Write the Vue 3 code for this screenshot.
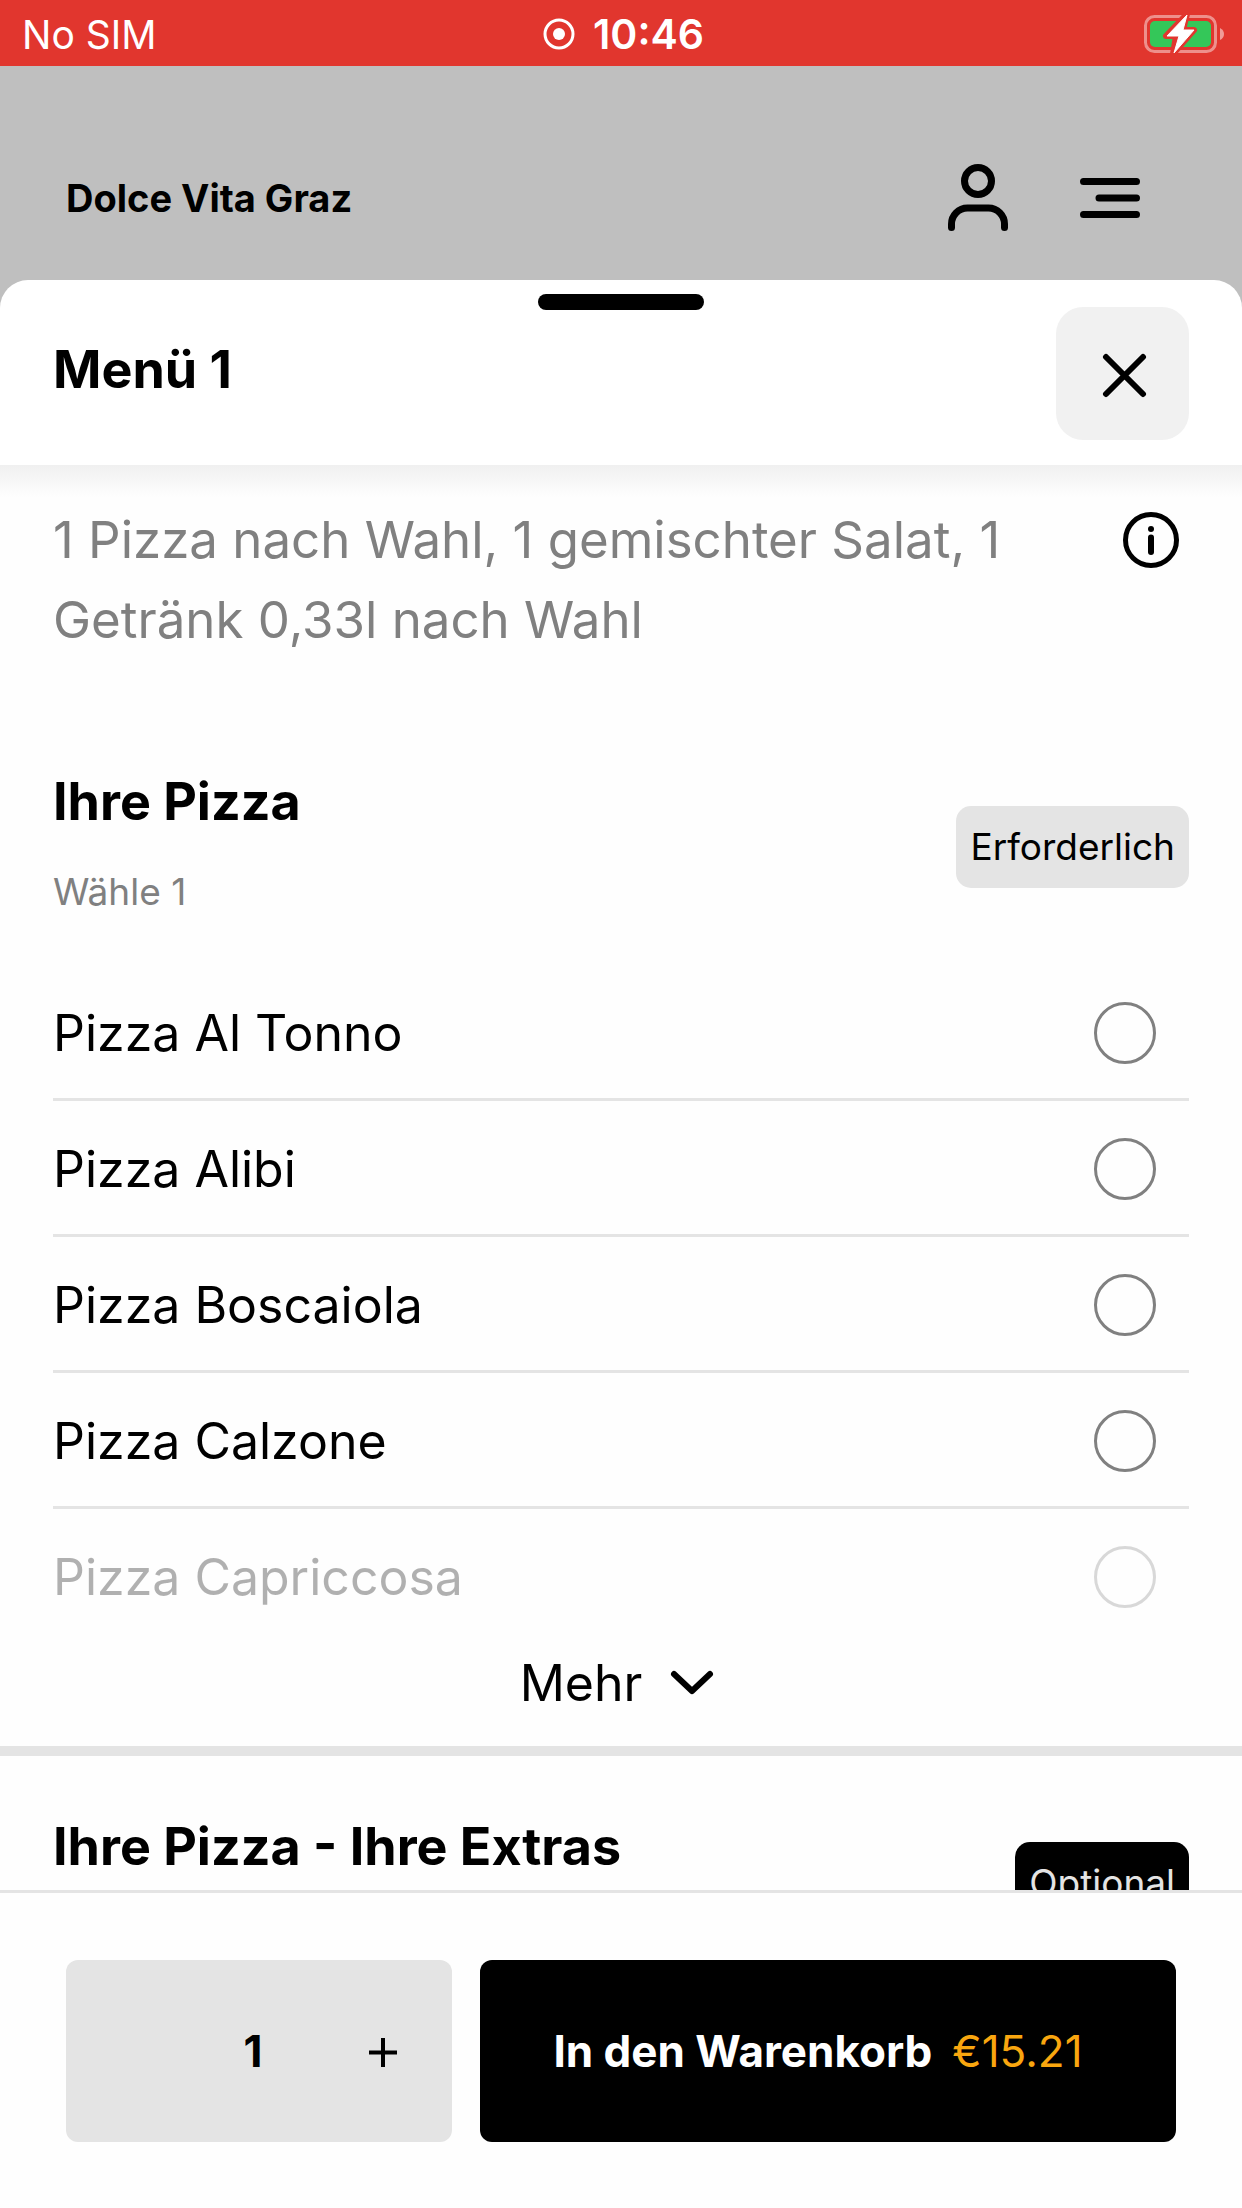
<script setup>
import { ref } from 'vue'

const pizzas = ['Pizza Al Tonno', 'Pizza Alibi', 'Pizza Boscaiola', 'Pizza Calzone', 'Pizza Capriccosa']
const selected = ref('')
const quantity = ref(1)
</script>

<template>
  <div class="screen">
    <div class="status">
      <span class="carrier">No SIM</span>
      <span class="clock">
        <svg class="record" viewBox="0 0 32 32" aria-hidden="true">
          <circle cx="16" cy="16" r="14" fill="none" stroke="#fff" stroke-width="3" />
          <circle cx="16" cy="16" r="6" fill="#fff" />
        </svg>
        10:46
      </span>
      <svg class="battery" viewBox="0 0 82 40" aria-hidden="true">
        <rect x="2.500" y="2.500" width="70" height="35" rx="9" fill="none" stroke="#fff" stroke-opacity=".45" stroke-width="3" />
        <rect x="7" y="7" width="61" height="26" rx="5" fill="#34c759" />
        <path d="M77 14q4 2 4 6t-4 6z" fill="#fff" fill-opacity=".5" />
        <path d="M44 0 23 22h10l-3 18 21-24H40z" fill="#fff" stroke="#e1362e" stroke-width="6" stroke-linejoin="round" />
        <path d="M44 1 24 22h12l-5 17 20-23H40z" fill="#fff" stroke="#fff" stroke-width="1" stroke-linejoin="round" />
      </svg>
    </div>

    <header class="appbar">
      <span class="brand">Dolce Vita Graz</span>
      <button class="icon-button" type="button" aria-label="Konto">
        <svg viewBox="0 0 60 68" fill="none" stroke="#000" stroke-width="7" stroke-linecap="round" aria-hidden="true">
          <circle cx="30" cy="17" r="13.500" />
          <path d="M3.500 63.500V60a16 16 0 0 1 16-16h21a16 16 0 0 1 16 16v3.500" />
        </svg>
      </button>
      <button class="icon-button" type="button" aria-label="Navigation">
        <svg viewBox="0 0 60 68" fill="none" stroke="#000" stroke-width="7" stroke-linecap="round" aria-hidden="true">
          <path d="M3.500 17.500h53M19 34h37.500M3.500 50.500h53" />
        </svg>
      </button>
    </header>

    <main class="sheet">
      <div class="sheet-head">
        <span class="handle"></span>
        <h1>Menü 1</h1>
        <button class="close" type="button" aria-label="Schließen">
          <svg viewBox="0 0 48 48" fill="none" stroke="#000" stroke-width="6" stroke-linecap="round" aria-hidden="true">
            <path d="M7 7l37 37M44 7L7 44" />
          </svg>
        </button>
      </div>

      <div class="content">
        <div class="intro">
          <p>1 Pizza nach Wahl, 1 gemischter Salat, 1 Getränk 0,33l nach Wahl</p>
          <button class="info" type="button" aria-label="Informationen">
            <svg viewBox="0 0 58 58" aria-hidden="true">
              <circle cx="29" cy="29" r="25.500" fill="none" stroke="#000" stroke-width="5" />
              <circle cx="29" cy="18" r="3" />
              <path d="M29 26.500v14.500" stroke="#000" stroke-width="6" stroke-linecap="round" />
            </svg>
          </button>
        </div>

        <section class="group">
          <div class="group-head">
            <div class="group-text">
              <h2>Ihre Pizza</h2>
              <p>Wähle 1</p>
            </div>
            <span class="badge">Erforderlich</span>
          </div>
          <ul>
            <li v-for="pizza in pizzas" :key="pizza">
              <label>
                <span>{{ pizza }}</span>
                <input v-model="selected" type="radio" name="pizza" :value="pizza" />
              </label>
            </li>
          </ul>
          <button class="more" type="button">
            Mehr
            <svg viewBox="0 0 52 30" fill="none" stroke="#000" stroke-width="6" stroke-linecap="round" stroke-linejoin="round" aria-hidden="true">
              <path d="M8 6l18 17L44 6" />
            </svg>
          </button>
        </section>

        <section class="group extras">
          <div class="group-head">
            <h2>Ihre Pizza - Ihre Extras</h2>
            <span class="badge dark">Optional</span>
          </div>
        </section>
      </div>
    </main>

    <footer>
      <div class="stepper">
        <output>{{ quantity }}</output>
        <button type="button" aria-label="Mehr hinzufügen" @click="quantity++">
          <svg viewBox="0 0 30 34" aria-hidden="true">
            <path d="M15 4v29M1 18.500h28" stroke="#000" stroke-width="4" />
          </svg>
        </button>
      </div>
      <button class="cart" type="button">
        <strong>In den Warenkorb</strong>
        <span>€15.21</span>
      </button>
    </footer>
  </div>
</template>

<style>
body {
  margin: 0;
}
</style>

<style scoped>
.screen {
  display: flex;
  flex-direction: column;
  height: 100vh;
  background: #bfbfbf;
  color: #000;
  font-family: Inter, "Liberation Sans", sans-serif;
  font-size: 50px;
}

h1,
h2,
p,
ul {
  margin: 0;
  padding: 0;
}

button {
  margin: 0;
  padding: 0;
  border: 0;
  background: none;
  color: inherit;
  font: inherit;
  cursor: pointer;
}

svg {
  display: block;
}

.status {
  display: grid;
  grid-template-columns: 1fr auto 1fr;
  align-items: center;
  height: 64px;
  padding: 2px 17px 0 22px;
  background: #e1362e;
  color: #fff;
  font-size: 39px;
}

.clock {
  display: flex;
  align-items: center;
  gap: 18px;
  font-size: 41px;
  font-weight: 600;
}

.record {
  width: 32px;
  height: 32px;
}

.battery {
  justify-self: end;
  width: 82px;
  height: 40px;
}

.appbar {
  display: flex;
  flex: none;
  align-items: center;
  gap: 72px;
  height: 164px;
  padding: 50px 102px 0 66px;
}

.brand {
  flex: 1;
  font-size: 38px;
  font-weight: 700;
}

.icon-button svg {
  width: 60px;
  height: 68px;
}

.sheet {
  display: flex;
  flex: 1;
  flex-direction: column;
  min-height: 0;
  border-radius: 28px 28px 0 0;
  background: #fff;
}

.sheet-head {
  position: relative;
  display: flex;
  flex: none;
  align-items: center;
  justify-content: space-between;
  padding: 27px 53px 25px;
}

.handle {
  position: absolute;
  top: 14px;
  left: 50%;
  width: 166px;
  height: 16px;
  border-radius: 8px;
  background: #000;
  transform: translateX(-50%);
}

h1,
h2 {
  font-size: 52px;
  font-weight: 700;
  line-height: 60px;
}

h1 {
  padding-bottom: 8px;
}

.close {
  display: grid;
  place-items: center;
  width: 133px;
  height: 133px;
  border-radius: 27px;
  background: #f1f1f1;
}

.close svg {
  width: 48px;
  height: 48px;
}

.content {
  flex: 1;
  min-height: 0;
  padding-top: 35px;
  overflow: hidden;
  background: linear-gradient(#f0f0f0, #fefefe 32px);
}

.intro {
  display: flex;
  align-items: flex-start;
  justify-content: space-between;
  padding: 0 62px 0 53px;
}

.intro p {
  width: 980px;
  color: #808080;
  font-size: 51px;
  line-height: 80px;
}

.info {
  margin-top: 11px;
}

.info svg {
  width: 58px;
  height: 58px;
}

.group {
  padding: 112px 53px 0;
}

.group-head {
  display: flex;
  align-items: center;
  justify-content: space-between;
}

.group-text {
  display: grid;
  gap: 34px;
  padding-bottom: 4px;
}

.group-text p {
  color: #808080;
  font-size: 37px;
  line-height: 52px;
}

.badge {
  padding: 0 14px;
  border-radius: 15px;
  background: #e4e4e4;
  font-size: 37px;
  line-height: 82px;
}

.badge.dark {
  background: #000;
  color: #e4e4e4;
}

ul {
  margin-top: 43px;
  list-style: none;
}

label {
  display: flex;
  align-items: center;
  justify-content: space-between;
  height: 131px;
  padding: 2px 33px 0 0;
  border-bottom: 3px solid #e4e4e4;
}

li:last-child label {
  border-bottom: 0;
  opacity: 0.3;
}

input {
  width: 62px;
  height: 62px;
  margin: 0;
  border: 3px solid #808080;
  border-radius: 50%;
  appearance: none;
}

input:checked {
  border-width: 18px;
  border-color: #000;
}

.more {
  display: flex;
  align-items: center;
  gap: 24px;
  height: 82px;
  margin: 0 auto 22px;
  padding-right: 4px;
}

.more svg {
  width: 52px;
  height: 30px;
}

.extras {
  padding-top: 61px;
  border-top: 10px solid #e4e4e4;
}

.extras .group-head {
  align-items: flex-start;
}

.extras .badge {
  margin-top: 25px;
}

footer {
  display: flex;
  flex: none;
  gap: 28px;
  padding: 67px 66px 66px;
  border-top: 3px solid #e4e4e4;
  background: #fefefe;
  font-size: 44px;
}

.stepper {
  display: grid;
  grid-template-columns: 1fr 130px 130px;
  flex: none;
  width: 382px;
  padding-right: 4px;
  border-radius: 12px;
  background: #e4e4e4;
}

output {
  grid-column: 2;
  align-self: center;
  font-weight: 700;
  text-align: center;
}

.stepper button {
  display: grid;
  place-items: center;
}

.stepper svg {
  width: 30px;
  height: 34px;
}

.cart {
  display: flex;
  flex: 1;
  align-items: center;
  justify-content: center;
  gap: 20px;
  height: 182px;
  padding-right: 20px;
  border-radius: 12px;
  background: #000;
  color: #fff;
}

.cart span {
  color: #f9a60f;
}
</style>
